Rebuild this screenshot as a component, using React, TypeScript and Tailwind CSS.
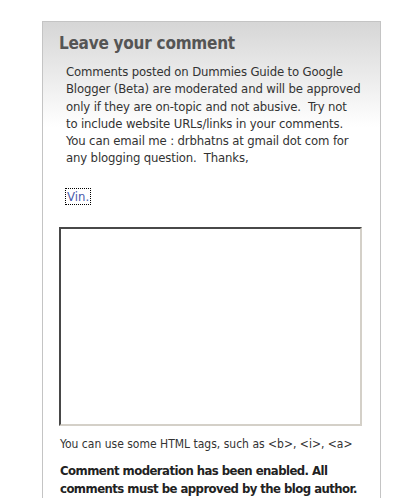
const lines = [
  "Comments posted on Dummies Guide to Google",
  "Blogger (Beta) are moderated and will be approved",
  "only if they are on-topic and not abusive.\u00a0 Try not",
  "to include website URLs/links in your comments.",
  "You can email me : drbhatns at gmail dot com for",
  "any blogging question.\u00a0 Thanks,",
];

export default function App() {
  return (
    <div className="w-[408px] h-[498px] overflow-hidden bg-white pt-[21px] pl-[42px] font-['DejaVu_Sans_Condensed','DejaVu_Sans',sans-serif]">
      <div className="w-[339px] h-[600px] border border-b-0 border-[#c4c4c4] bg-[linear-gradient(to_bottom,#d6d6d6,#ffffff_105px)]">
        <h2 className="pl-[16px] pt-[10px] text-[17px] leading-[22px] tracking-[-0.25px] font-bold text-[#555]">Leave your comment</h2>
        <div className="pl-[23px] pt-[9px] text-[13px] leading-[17.3px] tracking-[-0.15px] text-[#333]">
          {lines.map((l) => (
            <div key={l} className="whitespace-nowrap">{l}</div>
          ))}
        </div>
        <div className="pl-[23px] pt-[17px]">
          <a href="#" className="inline-block outline-1 outline-dotted outline-black px-[1px] text-[13px] leading-[15px] text-[#4a5aaa]">Vin.</a>
        </div>
        <div className="pl-[16px] pt-[19px]">
          <textarea className="block w-[303px] h-[199px] resize-none border-2 border-t-[#484848] border-l-[#484848] border-r-[#d4d0c8] border-b-[#d4d0c8] bg-white" />
        </div>
        <p className="pl-[17px] pt-[11px] text-[12px] leading-[14px] text-[#333]">You can use some HTML tags, such as &lt;b&gt;, &lt;i&gt;, &lt;a&gt;</p>
        <p className="pl-[17px] pt-[11px] pr-[4px] text-[13px] leading-[18px] tracking-[-0.55px] font-bold text-[#222]">Comment moderation has been enabled. All comments must be approved by the blog author.</p>
      </div>
    </div>
  );
}
